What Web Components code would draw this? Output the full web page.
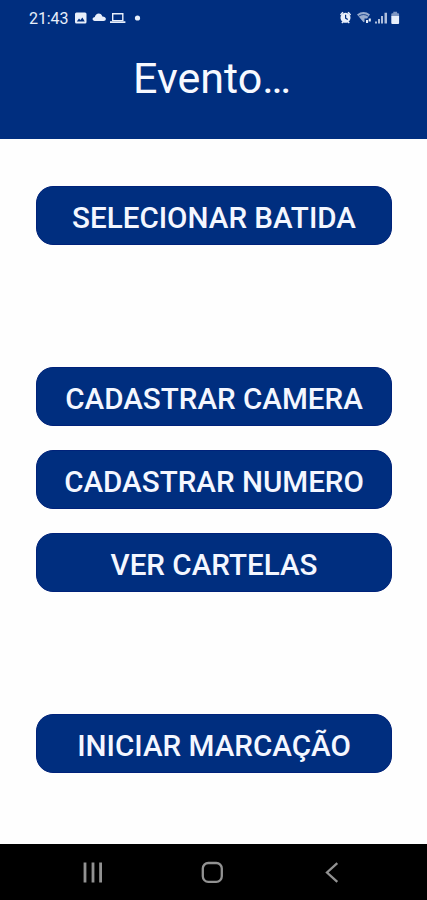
<!DOCTYPE html>
<html lang="pt-BR">
<head>
  <meta charset="utf-8">
  <meta name="viewport" content="width=device-width, initial-scale=1">
  <title>Evento</title>
  <style>
    body {
      margin: 0;
      background: #fefefe;
      font-family: Roboto, "Liberation Sans", sans-serif;
    }
  </style>
</head>
<body>
  <event-screen></event-screen>

  <script>
    const define = (name, html) => {
      const template = document.createElement('template');
      template.innerHTML = html;

      customElements.define(name, class extends HTMLElement {
        constructor() {
          super();
          this.attachShadow({ mode: 'open' });
          this.shadowRoot.appendChild(template.content.cloneNode(true));
        }
      });
    };

    define('status-bar', `
      <style>
        :host {
          display: flex;
          justify-content: space-between;
          align-items: center;
          height: 36px;
          padding: 0 26px 0 29px;
          box-sizing: border-box;
          color: #e8effb;
          font-size: 16px;
          line-height: 36px;
        }

        svg {
          display: block;
          fill: currentColor;
        }

        .left {
          display: flex;
          align-items: center;
          gap: 6px;
        }

        .time {
          width: 40px;
          padding-top: 1px;
          letter-spacing: -0.1px;
        }
      </style>
      <div class="left">
        <span class="time"><slot></slot></span>
        <svg width="68" height="14" viewBox="75 11 68 14">
          <path fill-rule="evenodd" d="M76.500 12.500h8.500q1.500 0 1.500 1.500v8q0 1.500-1.500 1.500h-8.500q-1.500 0-1.500-1.500v-8q0-1.500 1.500-1.500zM76.800 21.500h8l-2.400-4-2 2.600-1.400-1.700z"/>
          <path d="M94.500 21q-2-.3-2-2t2.300-2q.9-3.500 4-3.500 2.600 0 3.600 3 3.300.2 3.500 2.400 0 2-2.400 2.100z"/>
          <path fill-rule="evenodd" d="M112 13h11.500v8.500H112zM113.400 14.400v5.700h8.700v-5.700zM110 21.300h15.400v1.700H110z"/>
          <circle cx="137.500" cy="18" r="2.600"/>
        </svg>
      </div>
      <svg width="62" height="16" viewBox="339 10 62 16">
        <path fill-rule="evenodd" d="M345.500 12.800a5 5 0 1 0 .01 0zM345 14.800h1.200v3l1.900 1.200-.7 1-2.400-1.600z"/>
        <path d="M340 14.500l2.400-2.700 1.200.9-2.600 2.700zM347.500 12.700l1.200-.9 2.400 2.700-1 .9zM341.300 22.500l1.500-1.200 1 1-1.500 1.300zM347.300 22.300l1-1 1.500 1.200-1 1.100z"/>
        <path opacity=".65" d="M357 14.500q6.500-4.800 13 0l-2.900 4h-2.600v3.300l-1 .4z"/>
        <path fill="none" stroke="#002d7d" stroke-width=".8" d="M358.600 16.200q4.900-3.300 9.800 0"/>
        <path d="M366 20h2.100v3H366zM368.700 18.500h2.100v3h-2.100z"/>
        <path opacity=".75" d="M375 21.500h2v2h-2zM378 19h2v4.500h-2zM381 16h2v7.500h-2zM384.500 12.700h2.500v10.800h-2.500z"/>
        <path opacity=".55" d="M391.300 16.200v-2q0-1 1-1h1v-1.400h3.800v1.400h1q1 0 1 1v2z"/>
        <path d="M391.300 16h7.800v7q0 1-1 1h-5.800q-1 0-1-1z"/>
      </svg>
    `);

    define('app-header', `
      <style>
        :host {
          display: block;
          height: 139px;
          background: #002e7f;
          color: #f7f9ff;
        }

        h1 {
          margin: 0;
          padding: 17px 3px 0 0;
          font-size: 43px;
          font-weight: 400;
          line-height: 50px;
          text-align: center;
        }
      </style>
      <status-bar>21:43</status-bar>
      <h1><slot></slot></h1>
    `);

    define('menu-button', `
      <style>
        :host {
          display: block;
        }

        button {
          display: block;
          width: 100%;
          height: 59px;
          padding: 4px 0 0;
          border: 1px solid #00227a;
          border-radius: 17px;
          background: #002e7f;
          color: #f4f7ff;
          font: 500 29.6px/54px Roboto, "Liberation Sans", sans-serif;
          text-align: center;
          white-space: nowrap;
        }
      </style>
      <button type="button"><slot></slot></button>
    `);

    define('button-group', `
      <style>
        :host {
          display: flex;
          flex-direction: column;
          gap: 24px;
        }
      </style>
      <slot></slot>
    `);

    define('nav-bar', `
      <style>
        :host {
          display: block;
          height: 56px;
          background: #000;
        }

        nav {
          display: flex;
          justify-content: space-between;
          align-items: center;
          height: 56px;
          padding: 0 82px 0 80px;
        }

        svg {
          display: block;
          fill: none;
          stroke: #929292;
          stroke-width: 2.3;
        }
      </style>
      <nav>
        <svg width="26" height="26" viewBox="0 0 26 26"><path stroke-width="2.8" d="M5 3.500v20M13 3.500v20M20.600 3.500v20"/></svg>
        <svg width="26" height="26" viewBox="0 0 26 26"><rect x="2.800" y="4" width="19" height="18.800" rx="5.500"/></svg>
        <svg width="26" height="26" viewBox="0 0 26 26"><path d="M18.300 4.200L8 13.500l10.300 9.400"/></svg>
      </nav>
    `);

    define('event-screen', `
      <style>
        :host {
          display: flex;
          flex-direction: column;
          height: 900px;
        }

        main {
          flex: 1;
          display: flex;
          flex-direction: column;
          justify-content: space-between;
          padding: 47px 35px 71px 36px;
        }
      </style>
      <app-header>Evento…</app-header>
      <main>
        <menu-button>SELECIONAR BATIDA</menu-button>
        <button-group>
          <menu-button>CADASTRAR CAMERA</menu-button>
          <menu-button>CADASTRAR NUMERO</menu-button>
          <menu-button>VER CARTELAS</menu-button>
        </button-group>
        <menu-button>INICIAR MARCAÇÃO</menu-button>
      </main>
      <nav-bar></nav-bar>
    `);
  </script>
</body>
</html>
